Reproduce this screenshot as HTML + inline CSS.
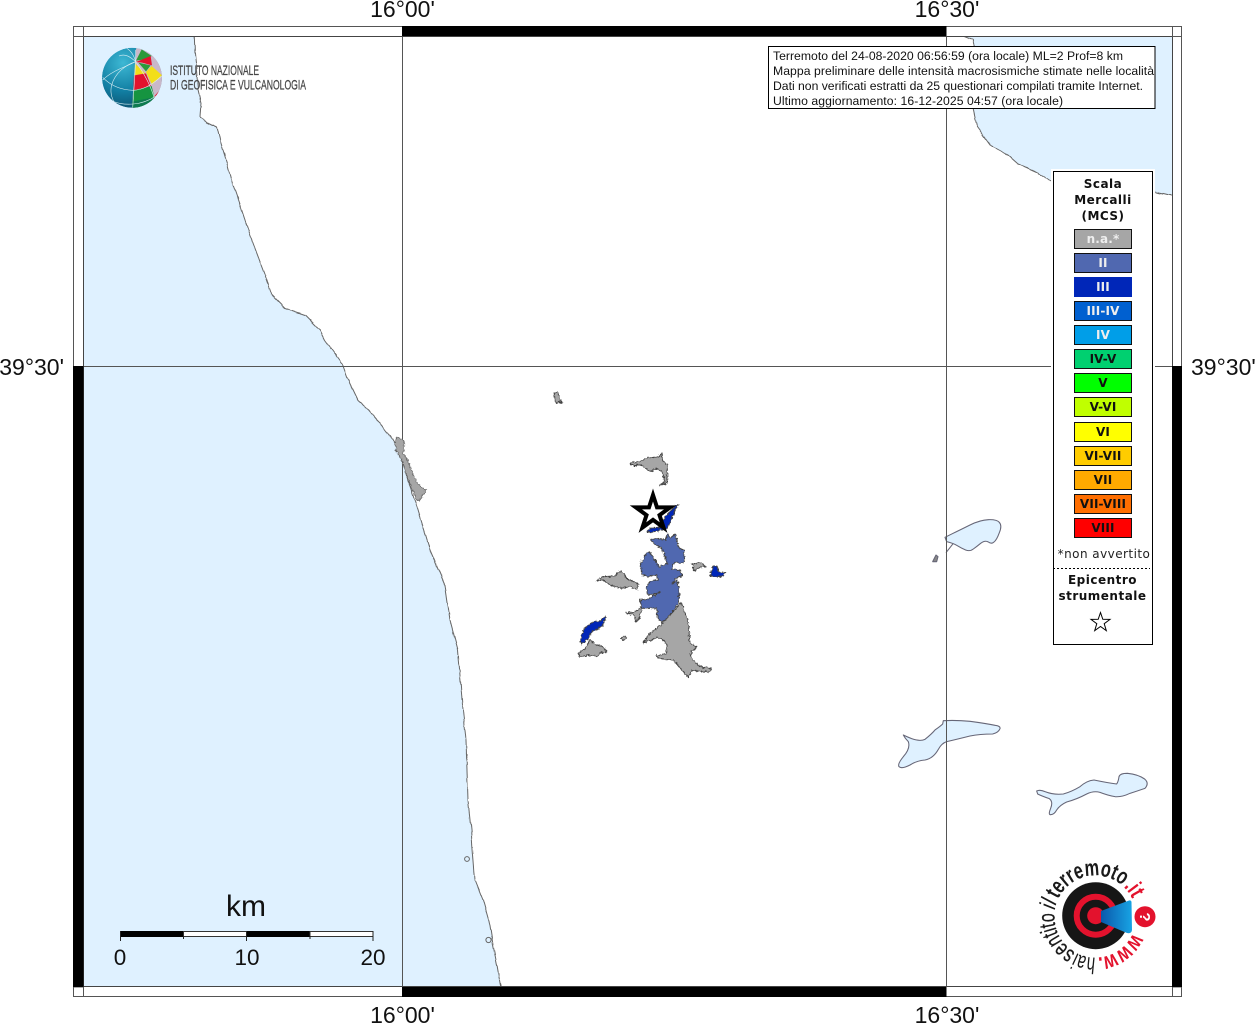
<!DOCTYPE html>
<html lang="it">
<head>
<meta charset="utf-8">
<title>Mappa intensità macrosismiche</title>
<style>
html,body{margin:0;padding:0;background:#fff;width:1255px;height:1024px;overflow:hidden}
svg{display:block}
.ax{font-family:"Liberation Sans",sans-serif;font-size:23px;fill:#111}
.info{font-family:"Liberation Sans",sans-serif;font-size:12.2px;fill:#111}
.lg{font-family:"DejaVu Sans",sans-serif;font-size:12px;font-weight:bold;text-anchor:middle;fill:#111;letter-spacing:.5px}
.sm{letter-spacing:.15px}
.ring{font-family:"Liberation Sans",sans-serif;font-size:23px;fill:#1a1a1a}
</style>
</head>
<body>
<svg width="1255" height="1024" viewBox="0 0 1255 1024" xmlns="http://www.w3.org/2000/svg">
<defs>
<radialGradient id="gb" cx="35%" cy="25%" r="85%"><stop offset="0" stop-color="#3db8d4"/><stop offset=".55" stop-color="#127fa3"/><stop offset="1" stop-color="#0b4a66"/></radialGradient>
<linearGradient id="beam" x1="0" x2="1" y1="0" y2="0"><stop offset="0" stop-color="#0a58ab"/><stop offset="1" stop-color="#18a4e4"/></linearGradient>
<clipPath id="gc"><circle cx="132" cy="77.8" r="30"/></clipPath>
<clipPath id="mapc"><rect x="83" y="36" width="1089" height="951"/></clipPath>
<filter id="jag" x="-10%" y="-10%" width="120%" height="120%" color-interpolation-filters="sRGB">
<feTurbulence type="fractalNoise" baseFrequency=".38" numOctaves="2" seed="3" result="n"/>
<feDisplacementMap in="SourceGraphic" in2="n" scale="4" xChannelSelector="R" yChannelSelector="G"/>
<feGaussianBlur stdDeviation=".22"/>
</filter>
<filter id="wig" x="-5%" y="-5%" width="110%" height="110%" color-interpolation-filters="sRGB">
<feTurbulence type="fractalNoise" baseFrequency=".09" numOctaves="2" seed="7" result="n"/>
<feDisplacementMap in="SourceGraphic" in2="n" scale="3" xChannelSelector="R" yChannelSelector="G"/>
<feGaussianBlur stdDeviation=".25"/>
</filter>
<filter id="soft" x="-5%" y="-5%" width="110%" height="110%"><feGaussianBlur stdDeviation=".3"/></filter>
</defs>

<rect x="83" y="36" width="1089" height="951" fill="#fff"/>
<g clip-path="url(#mapc)">
<g filter="url(#wig)">
<!-- Sea west -->
<path d="M70 30H194L195 53L196 63L198 90L201 103L200 117L207 122L217 127L220 140L227 163L231 179L240 205L250 235L265 275L272 295L285 308L305 315L320 330L325 340L342 363L347 377L358 400L367 408L383 427L395 443L402 460L408 480L418 510L430 550L445 585L450 620L458 650L462 700L466 740L468 800L471 830L475 880L483 900L490 925L493 945L497 965L502 995H70Z" fill="#dff1ff" stroke="#666" stroke-width="1" stroke-linejoin="round"/>
<!-- Sea north-east -->
<path d="M963 30V36L973 40L975 47L974 80L973 108L977 127L990 145L1008 155L1017 163L1037 172L1052 182L1100 188L1155 192L1180 198V30Z" fill="#dff1ff" stroke="#666" stroke-width="1" stroke-linejoin="round"/>
</g>
</g>
<!-- Lakes -->
<g filter="url(#soft)">
<g transform="translate(890 510) scale(.33333)" fill="#dff1ff" stroke="#667" stroke-width="3.2" stroke-linejoin="round">
<path d="M165 82L187 71Q210 60 240 45Q270 30 295 29Q320 28 328 37Q337 47 328 68Q320 90 312 96Q305 103 295 96Q285 90 272 100Q260 110 250 117Q240 125 227 120Q215 115 202 107Q190 100 170 95Z"/>
<path d="M190 100L168 128" fill="none"/>
<path d="M160 632Q200 630 240 634Q285 640 315 646Q332 648 330 656Q325 668 308 672Q270 672 240 678Q200 688 170 695Q155 700 145 718Q130 745 105 750Q80 752 60 765Q35 778 27 770Q22 762 40 740Q62 715 55 695Q45 685 40 675Q50 680 65 686Q90 695 105 688Q125 672 135 660Q152 648 158 642Z"/>
<path d="M440 843Q450 838 465 845Q490 855 520 852Q545 845 570 830Q590 812 612 810Q650 818 680 822Q685 815 687 800Q690 790 712 790Q745 793 765 808Q778 820 765 835Q745 842 720 850Q695 862 675 860Q650 855 630 847Q610 842 590 852Q560 868 530 876Q510 885 500 900Q492 915 480 914Q475 912 482 895Q490 875 478 866Q455 858 443 852Z"/>
<path d="M128 155L138 135L144 140L140 155Z" fill="#888"/>
</g>
</g>
<circle cx="467" cy="859" r="2.4" fill="#dff1ff" stroke="#666"/>
<circle cx="488.500" cy="940" r="2.600" fill="#dff1ff" stroke="#666"/>

<!-- Grid -->
<path d="M402.500 36V987M946.500 36V987M83 366.500H1172" stroke="#555" stroke-width="1" fill="none"/>

<!-- Frame -->
<rect x="73.500" y="26.500" width="1108" height="970" fill="none" stroke="#555"/>
<rect x="83.500" y="36.500" width="1089" height="950" fill="none" stroke="#444"/>
<path d="M83.500 26.500V36.500M1172.500 26.500V36.500M83.500 987V997M1172.500 987V997M73.500 36.500H83.500M73.500 987H83.500M1172 36.500H1181.500M1172 987H1181.500" stroke="#555"/>
<rect x="402" y="26" width="544.500" height="10" fill="#000"/>
<rect x="402" y="987" width="544.500" height="10" fill="#000"/>
<rect x="73" y="366" width="10.500" height="621" fill="#000"/>
<rect x="1172" y="366" width="10" height="621" fill="#000"/>

<!-- Axis labels -->
<text class="ax" x="402.500" y="17" text-anchor="middle">16°00'</text>
<text class="ax" x="947" y="17" text-anchor="middle">16°30'</text>
<text class="ax" x="402.500" y="1023" text-anchor="middle">16°00'</text>
<text class="ax" x="947" y="1023" text-anchor="middle">16°30'</text>
<text class="ax" x="64" y="375" text-anchor="end">39°30'</text>
<text class="ax" x="1191" y="375">39°30'</text>

<!-- Regions -->
<g filter="url(#jag)">
<g transform="translate(560 440) scale(.33333)" stroke="#444" stroke-width="3" stroke-linejoin="round">
<path fill="#5068b0" d="M322 280L330 295L345 282L352 305L358 325L372 330L374 365L358 372L350 366L338 372L336 386L362 392L365 408L345 415L338 432L352 420L358 455L355 490L335 518L312 545L295 540L290 505L245 505L240 480L270 475L300 455L275 465L262 462L258 440L270 425L295 418L290 405L265 410L245 405L242 372L255 345L268 335L285 360L298 382L322 370L312 340L302 322L285 315L272 298L295 295L315 300Z"/>
<path fill="#a6a6a6" d="M365 488L375 520L385 550L390 610L410 620L392 640L395 655L420 680L455 685L450 695L420 695L395 690L385 712L365 690L340 660L295 655L290 648L320 640L320 610L295 590L250 610L265 585L290 565L312 545L335 520Z"/>
<path fill="#a6a6a6" d="M212 68L240 65L260 55L295 50L308 40L305 58L322 75L322 130L300 135L315 125L305 95L290 85L270 95L245 75L215 75Z"/>
<path fill="#0026b8" d="M320 225L345 198L356 195L345 210L335 240L320 265L285 275L260 275L270 265L300 262L310 240Z"/>
<path fill="#a6a6a6" d="M108 422L130 410L165 408L178 392L190 400L200 415L235 432L232 450L215 440L180 445L150 435L130 420Z"/>
<path fill="#a6a6a6" d="M198 518L225 515L240 505L245 510L235 540L228 545L225 528Z"/>
<path fill="#0026b8" d="M60 605L70 570L90 550L125 540L135 528L140 530L125 560L95 575L85 595L65 612Z"/>
<path fill="#a6a6a6" d="M55 642L75 625L90 600L110 615L130 620L140 638L120 638L110 650L85 645L60 650Z"/>
<path fill="#a6a6a6" d="M182 595L195 588L200 595L190 600Z"/>
<path fill="#a6a6a6" d="M397 372L420 368L435 378L415 385L402 392Z"/>
<path fill="#0026b8" d="M450 405L460 378L470 378L475 395L495 398L492 408L470 410L450 408Z"/>
</g>
<path fill="#a6a6a6" stroke="#444" d="M554 393L558 392L559 398L562 402L556 403Z"/>
<g transform="translate(385 425) scale(.33333)"><path fill="#a6a6a6" stroke="#555" stroke-width="2.400" d="M35 38L45 40L58 48L55 85L65 100L75 125L85 150L100 180L125 195L118 205L105 225L95 225L80 190L65 150L52 110L40 90L30 60Z"/></g>
</g>

<!-- Epicentre star -->
<path d="M653 495L657 507.400L670.100 507.400L659.500 515.100L663.600 527.600L653 519.900L642.400 527.600L646.500 515.100L635.900 507.400L649 507.400Z" fill="#fff" stroke="#000" stroke-width="4"/>

<!-- Info box -->
<rect x="768.500" y="46.500" width="386.500" height="62" fill="#fff" stroke="#000"/>
<text class="info" x="773" y="60" textLength="350">Terremoto del 24-08-2020 06:56:59 (ora locale) ML=2 Prof=8 km</text>
<text class="info" x="773" y="75" textLength="381">Mappa preliminare delle intensità macrosismiche stimate nelle località</text>
<text class="info" x="773" y="90" textLength="370">Dati non verificati estratti da 25 questionari compilati tramite Internet.</text>
<text class="info" x="773" y="105" textLength="290">Ultimo aggiornamento: 16-12-2025 04:57 (ora locale)</text>

<!-- Legend -->
<rect x="1051" y="169" width="104" height="478" fill="#fff"/>
<rect x="1053.500" y="171.500" width="99" height="473" fill="#fff" stroke="#000"/>
<text class="lg" x="1103" y="188">Scala</text>
<text class="lg" x="1103" y="204">Mercalli</text>
<text class="lg" x="1103" y="220">(MCS)</text>
<g stroke="#111" stroke-width="1">
<rect x="1074.500" y="229.500" width="57" height="19" fill="#a6a6a6"/>
<rect x="1074.500" y="253.500" width="57" height="19" fill="#5068b0"/>
<rect x="1074.500" y="277.500" width="57" height="19" fill="#0026b8" stroke="#0026b8"/>
<rect x="1074.500" y="301.500" width="57" height="19" fill="#0060d0"/>
<rect x="1074.500" y="325.500" width="57" height="19" fill="#009ee8"/>
<rect x="1074.500" y="349.500" width="57" height="19" fill="#00d070"/>
<rect x="1074.500" y="373.500" width="57" height="19" fill="#00ff00"/>
<rect x="1074.500" y="397.500" width="57" height="19" fill="#c0ff00"/>
<rect x="1074.500" y="422.500" width="57" height="19" fill="#ffff00"/>
<rect x="1074.500" y="446.500" width="57" height="19" fill="#ffcc00"/>
<rect x="1074.500" y="470.500" width="57" height="19" fill="#ffaa00"/>
<rect x="1074.500" y="494.500" width="57" height="19" fill="#ff6e00"/>
<rect x="1074.500" y="518.500" width="57" height="19" fill="#ff0000"/>
</g>
<g>
<text class="lg sm" x="1103" y="243" style="fill:#eee">n.a.*</text>
<text class="lg sm" x="1103" y="267" style="fill:#eee">II</text>
<text class="lg sm" x="1103" y="291" style="fill:#eee">III</text>
<text class="lg sm" x="1103" y="315" style="fill:#eee">III-IV</text>
<text class="lg sm" x="1103" y="339" style="fill:#eee">IV</text>
<text class="lg sm" x="1103" y="363">IV-V</text>
<text class="lg sm" x="1103" y="387">V</text>
<text class="lg sm" x="1103" y="411">V-VI</text>
<text class="lg sm" x="1103" y="436">VI</text>
<text class="lg sm" x="1103" y="460">VI-VII</text>
<text class="lg sm" x="1103" y="484">VII</text>
<text class="lg sm" x="1103" y="508">VII-VIII</text>
<text class="lg sm" x="1103" y="532">VIII</text>
</g>
<text class="lg" x="1104" y="558" style="font-weight:normal;fill:#222;letter-spacing:.45px">*non avvertito</text>
<path d="M1053 568.500H1150" stroke="#000" stroke-dasharray="2 2"/>
<text class="lg" x="1102.500" y="584">Epicentro</text>
<text class="lg" x="1102.500" y="600">strumentale</text>
<path d="M1100.500 612.500L1102.800 619.300L1110 619.400L1104.200 623.700L1106.300 630.600L1100.500 626.500L1094.700 630.600L1096.800 623.700L1091 619.400L1098.200 619.300Z" fill="#fff" stroke="#000" stroke-width="1"/>

<!-- Scale bar -->
<text x="246" y="916" text-anchor="middle" font-family="Liberation Sans, sans-serif" font-size="30" fill="#111">km</text>
<rect x="120" y="931" width="63.500" height="6" fill="#000"/>
<rect x="183.500" y="931.500" width="63" height="5" fill="#fff" stroke="#333"/>
<rect x="246" y="931" width="64" height="6" fill="#000"/>
<rect x="310" y="931.500" width="63" height="5" fill="#fff" stroke="#333"/>
<path d="M120.500 931V941M246.500 931V941M373 931V941M183.500 936V939M310 936V939" stroke="#222"/>
<g font-family="Liberation Sans, sans-serif" font-size="22.500" fill="#111" text-anchor="middle">
<text x="120" y="965">0</text>
<text x="247" y="965">10</text>
<text x="373" y="965">20</text>
</g>

<!-- INGV logo -->
<g clip-path="url(#gc)">
<circle cx="132" cy="77.800" r="30" fill="url(#gb)"/>
<g transform="translate(70 20) scale(.33333)">
<path fill="#c9b8c9" d="M198 85H290V262H186Z"/>
<path fill="#2b9a3a" d="M198 122L215 88L245 108L225 118Z"/>
<path fill="#e3122d" d="M198 126L242 108L246 136L216 128Z"/>
<path fill="#f2de1a" d="M195 130L226 160L194 166Z"/>
<path fill="#2b9a3a" d="M205 128L242 136L228 154Z"/>
<path fill="#f2de1a" d="M228 156L245 138L276 166L246 194Z"/>
<path fill="#e3122d" d="M192 166L228 160L243 198L190 211Z"/>
<path fill="#169440" d="M190 211L245 198L254 235L235 262L186 266Z"/>
<path fill="#e3122d" d="M252 230L268 212L262 240Z"/>
<path fill="#0e7a50" d="M186 245L250 232L235 270H186Z"/>
<g fill="none" stroke="#d8eef4" stroke-width="1.800">
<path d="M197 90V125L188 265"/>
<path d="M197 125C165 135 135 160 125 195C120 215 125 235 135 250"/>
<path d="M197 125C170 140 128 150 98 180"/>
<path d="M197 125C190 100 180 92 172 86"/>
<path d="M98 172C120 195 150 210 190 211C215 210 240 200 275 168"/>
<path d="M112 235C140 252 165 254 190 252C215 250 240 240 258 228"/>
<path d="M197 125C215 150 240 190 252 232"/>
<path d="M147 108C165 100 180 110 197 125"/>
</g>
</g>
</g>
<text x="170" y="75" font-family="Liberation Sans, sans-serif" font-size="14" fill="#444" stroke="#444" stroke-width=".25" textLength="89" lengthAdjust="spacingAndGlyphs">ISTITUTO NAZIONALE</text>
<text x="170" y="89.500" font-family="Liberation Sans, sans-serif" font-size="14" fill="#444" stroke="#444" stroke-width=".25" textLength="136" lengthAdjust="spacingAndGlyphs">DI GEOFISICA E VULCANOLOGIA</text>

<!-- hai sentito logo -->
<circle cx="1095.700" cy="915.700" r="33.500" fill="#161616"/>
<circle cx="1095.700" cy="915.700" r="19" fill="none" stroke="#e3122d" stroke-width="6"/>
<circle cx="1095.700" cy="915.700" r="8.500" fill="#e3122d"/>
<path d="M1101 911L1129 900.500Q1131 900 1131.500 902L1132 930Q1131.500 934 1127 933L1101 922Z" fill="url(#beam)"/>
<circle cx="1145" cy="916.700" r="10.500" fill="#e3122d"/>
<text x="0" y="0" transform="translate(1140 917) rotate(90)" font-family="Liberation Sans, sans-serif" font-size="15" font-weight="bold" fill="#fff" text-anchor="middle">?</text>
<path id="ring" d="M1132.860 933A41 41 0 1 1 1058.540 898.400A41 41 0 0 1 1132.860 933" fill="none"/>
<text class="ring" font-weight="bold" style="fill:#e3122d"><textPath href="#ring" startOffset="0" textLength="45" lengthAdjust="spacingAndGlyphs">www.</textPath></text>
<text class="ring"><textPath href="#ring" startOffset="47" textLength="20" lengthAdjust="spacingAndGlyphs">hai</textPath></text>
<text class="ring" stroke="#1a1a1a" stroke-width=".3"><textPath href="#ring" startOffset="68" textLength="47" lengthAdjust="spacingAndGlyphs">sentito</textPath></text>
<text class="ring" font-style="italic"><textPath href="#ring" startOffset="118" textLength="9" lengthAdjust="spacingAndGlyphs">il</textPath></text>
<text class="ring" font-weight="bold"><textPath href="#ring" startOffset="129.500" textLength="76" lengthAdjust="spacingAndGlyphs">terremoto</textPath></text>
<text class="ring" font-weight="bold" style="fill:#e3122d"><textPath href="#ring" startOffset="207" textLength="15" lengthAdjust="spacingAndGlyphs">.it</textPath></text>
</svg>
</body>
</html>
